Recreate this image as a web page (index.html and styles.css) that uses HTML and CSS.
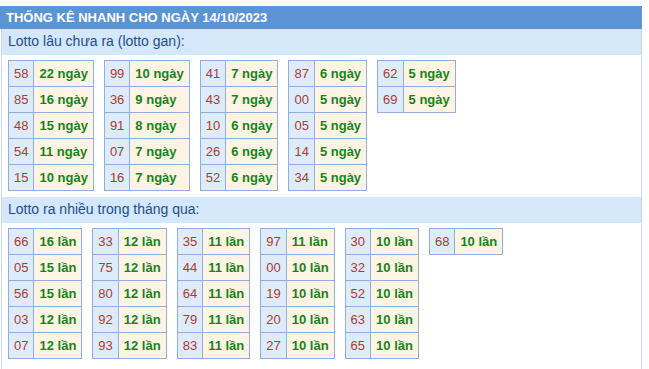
FILE: index.html
```html
<!DOCTYPE html>
<html lang="vi">
<head>
<meta charset="utf-8">
<title>Thống kê nhanh</title>
<link rel="stylesheet" href="styles.css">
</head>
<body>
<div class="stats">
  <div class="stats-title">THỐNG KÊ NHANH CHO NGÀY 14/10/2023</div>
  <div class="stats-body">
    <div class="section-title">Lotto lâu chưa ra (lotto gan):</div>
    <div class="tables">
      <table class="lotto">
        <tr><td class="num">58</td><td class="val">22 ngày</td></tr>
        <tr><td class="num">85</td><td class="val">16 ngày</td></tr>
        <tr><td class="num">48</td><td class="val">15 ngày</td></tr>
        <tr><td class="num">54</td><td class="val">11 ngày</td></tr>
        <tr><td class="num">15</td><td class="val">10 ngày</td></tr>
      </table>
      <table class="lotto">
        <tr><td class="num">99</td><td class="val">10 ngày</td></tr>
        <tr><td class="num">36</td><td class="val">9 ngày</td></tr>
        <tr><td class="num">91</td><td class="val">8 ngày</td></tr>
        <tr><td class="num">07</td><td class="val">7 ngày</td></tr>
        <tr><td class="num">16</td><td class="val">7 ngày</td></tr>
      </table>
      <table class="lotto">
        <tr><td class="num">41</td><td class="val">7 ngày</td></tr>
        <tr><td class="num">43</td><td class="val">7 ngày</td></tr>
        <tr><td class="num">10</td><td class="val">6 ngày</td></tr>
        <tr><td class="num">26</td><td class="val">6 ngày</td></tr>
        <tr><td class="num">52</td><td class="val">6 ngày</td></tr>
      </table>
      <table class="lotto">
        <tr><td class="num">87</td><td class="val">6 ngày</td></tr>
        <tr><td class="num">00</td><td class="val">5 ngày</td></tr>
        <tr><td class="num">05</td><td class="val">5 ngày</td></tr>
        <tr><td class="num">14</td><td class="val">5 ngày</td></tr>
        <tr><td class="num">34</td><td class="val">5 ngày</td></tr>
      </table>
      <table class="lotto">
        <tr><td class="num">62</td><td class="val">5 ngày</td></tr>
        <tr><td class="num">69</td><td class="val">5 ngày</td></tr>
      </table>
    </div>

    <div class="section-title">Lotto ra nhiều trong tháng qua:</div>
    <div class="tables">
      <table class="lotto">
        <tr><td class="num">66</td><td class="val">16 lần</td></tr>
        <tr><td class="num">05</td><td class="val">15 lần</td></tr>
        <tr><td class="num">56</td><td class="val">15 lần</td></tr>
        <tr><td class="num">03</td><td class="val">12 lần</td></tr>
        <tr><td class="num">07</td><td class="val">12 lần</td></tr>
      </table>
      <table class="lotto">
        <tr><td class="num">33</td><td class="val">12 lần</td></tr>
        <tr><td class="num">75</td><td class="val">12 lần</td></tr>
        <tr><td class="num">80</td><td class="val">12 lần</td></tr>
        <tr><td class="num">92</td><td class="val">12 lần</td></tr>
        <tr><td class="num">93</td><td class="val">12 lần</td></tr>
      </table>
      <table class="lotto">
        <tr><td class="num">35</td><td class="val">11 lần</td></tr>
        <tr><td class="num">44</td><td class="val">11 lần</td></tr>
        <tr><td class="num">64</td><td class="val">11 lần</td></tr>
        <tr><td class="num">79</td><td class="val">11 lần</td></tr>
        <tr><td class="num">83</td><td class="val">11 lần</td></tr>
      </table>
      <table class="lotto">
        <tr><td class="num">97</td><td class="val">11 lần</td></tr>
        <tr><td class="num">00</td><td class="val">10 lần</td></tr>
        <tr><td class="num">19</td><td class="val">10 lần</td></tr>
        <tr><td class="num">20</td><td class="val">10 lần</td></tr>
        <tr><td class="num">27</td><td class="val">10 lần</td></tr>
      </table>
      <table class="lotto">
        <tr><td class="num">30</td><td class="val">10 lần</td></tr>
        <tr><td class="num">32</td><td class="val">10 lần</td></tr>
        <tr><td class="num">52</td><td class="val">10 lần</td></tr>
        <tr><td class="num">63</td><td class="val">10 lần</td></tr>
        <tr><td class="num">65</td><td class="val">10 lần</td></tr>
      </table>
      <table class="lotto">
        <tr><td class="num">68</td><td class="val">10 lần</td></tr>
      </table>
    </div>
  </div>
</div>
</body>
</html>
```

FILE: styles.css
```css
* {
  box-sizing: border-box;
}

body {
  margin: 0;
  padding-top: 6px;
  background: #ffffff;
  font-family: "Liberation Sans", Arial, sans-serif;
}

.stats {
  width: 642px;
}

.stats-title {
  height: 23px;
  line-height: 23px;
  padding-left: 6px;
  background: #5b94d5;
  color: #ffffff;
  font-size: 13px;
  font-weight: bold;
  border-right: 1px solid #6f9cd0;
}

.stats-body {
  margin-left: 1px;
  border-left: 1px solid #c9d6e6;
  border-right: 1px solid #c9d6e6;
  padding-bottom: 6px;
}

.section-title {
  height: 26px;
  line-height: 25px;
  padding-left: 6px;
  background: #d4e7fb;
  color: #1d4e8f;
  font-size: 14px;
}

.tables {
  display: flex;
  align-items: flex-start;
  gap: 10px;
  padding: 5px 0 6px 6px;
}

.lotto {
  border-collapse: collapse;
  font-size: 13px;
}

.lotto td {
  height: 26px;
  padding: 0 5px;
  border: 1px solid #93aedc;
  white-space: nowrap;
}

.lotto .num {
  background: #deebfb;
  color: #ad3b2a;
}

.lotto .val {
  background: #fdf4e4;
  color: #1a821a;
  font-weight: bold;
}
```
